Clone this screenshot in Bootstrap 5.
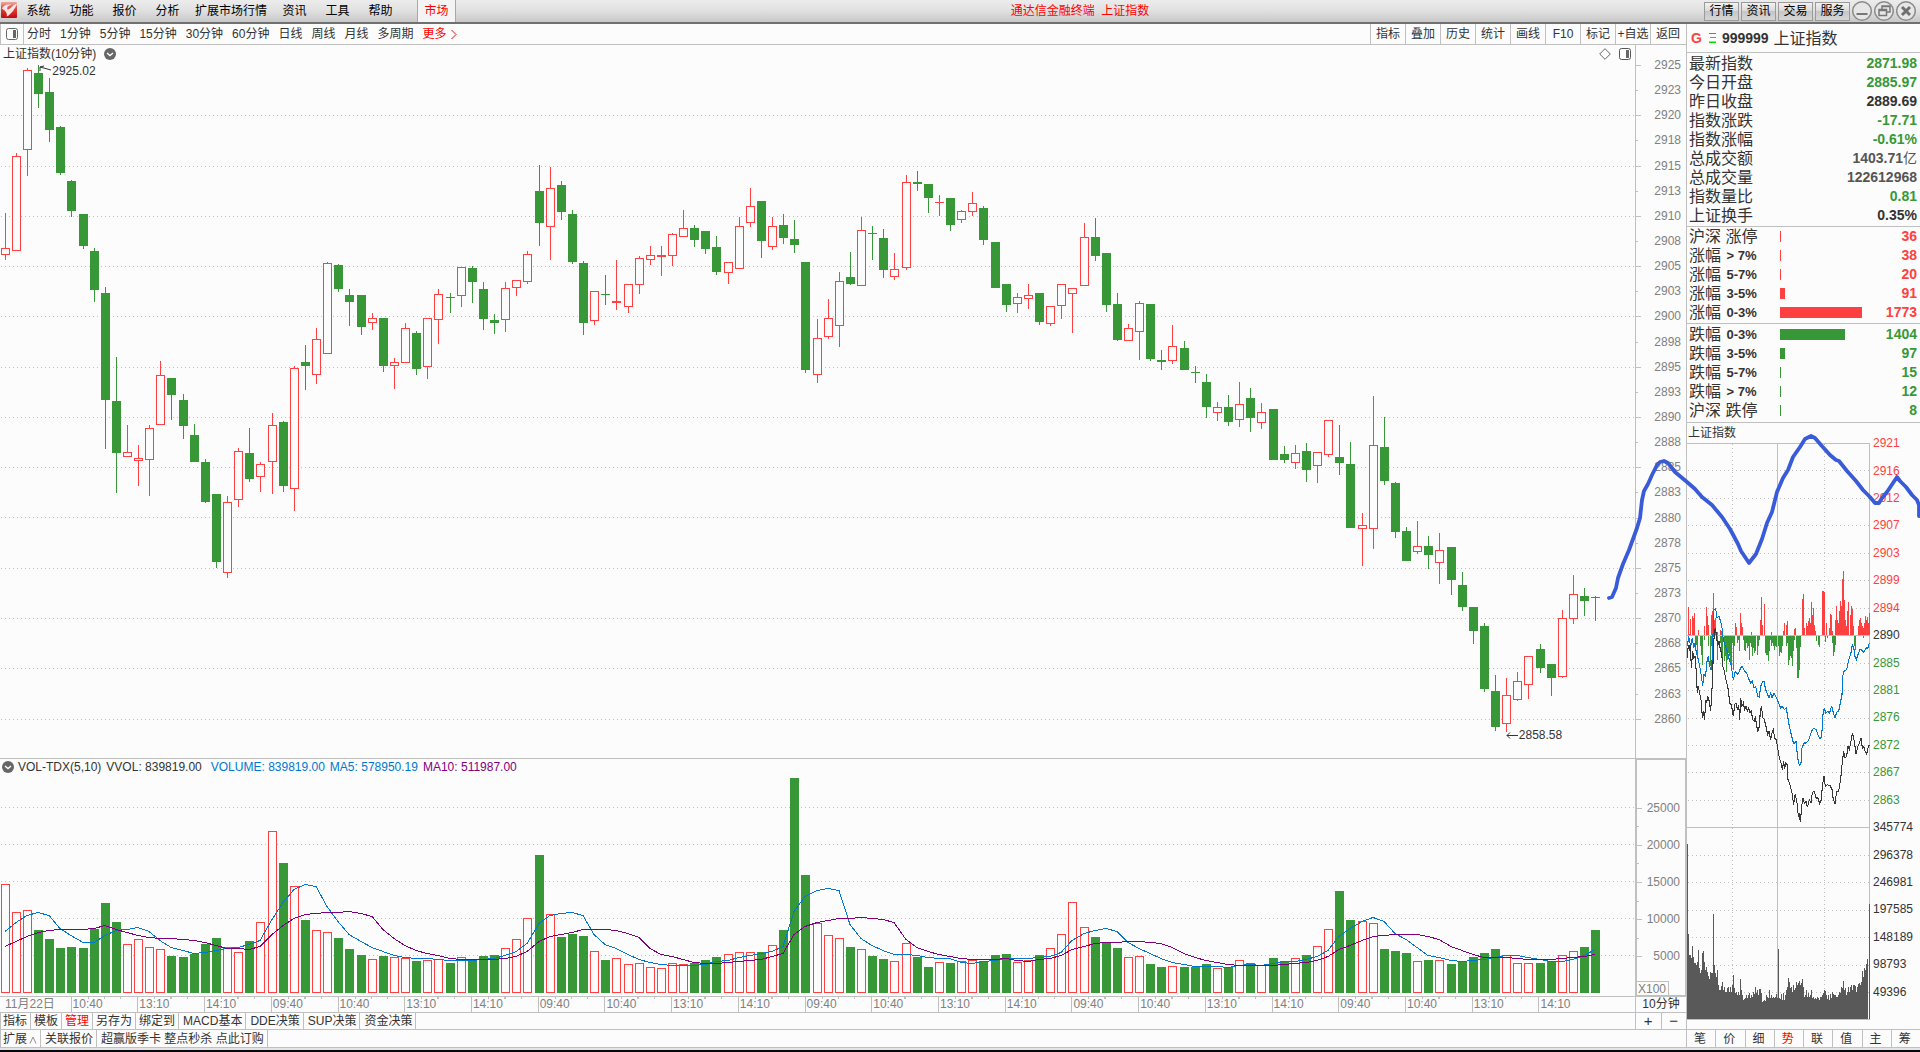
<!DOCTYPE html>
<html lang="zh-CN">
<head>
<meta charset="utf-8">
<meta name="viewport" content="width=device-width, initial-scale=1">
<title>通达信金融终端 上证指数</title>
<link href="https://cdn.jsdelivr.net/npm/bootstrap@5.3.0/dist/css/bootstrap.min.css" rel="stylesheet">
<style>
:root{--up:#ff4040;--down:#389838;--rule:#c0c0c0;--ink:#333;--axis:#808080;--ma5:#0078d0;--ma10:#800080}
body{background:#fcfcfc;color:var(--ink);font-family:"Liberation Sans","Noto Sans CJK SC",sans-serif;font-size:12px;line-height:15px}
button{background:none;border:0;padding:0;color:inherit;font:inherit;white-space:nowrap}
svg{display:block}
.up{color:var(--up)}.down{color:var(--down)}.hot{color:#f00}
.titlebar{height:24px;background:linear-gradient(#ececec,#e2e2e2 45%,#c8c8c8);border-bottom:2px solid #707070;color:#000}
.titlebar .brand{width:16px;height:16px;margin:2px 0 4px 1px}
.menu button{min-width:43px}
.menu .wide{min-width:84px}
.menu .current{min-width:39px;margin-left:15px;background:#f4f4f4;border:solid #a8a8a8;border-width:0 1px;color:#f00}
.quick{width:35px;height:19px;border:1px solid #9a9a9a;background:linear-gradient(#f2f2f2,#d8d8d8 50%,#c6c6c6 50%,#d6d6d6)}
.tools{height:21px;border-bottom:1px solid var(--rule)}
.tools .layout{width:24px;border-right:1px solid var(--rule);border-left:1px solid var(--rule)}
.periods{gap:9px;padding-left:3px}
.actions{padding-right:1px}
.actions button{width:35px;border-left:1px solid var(--rule)}
.stack{display:grid;min-width:0}
.stack>*{grid-area:1/1;min-width:0}
.price{height:714px;border-bottom:1px solid var(--rule)}
.volume{height:238px;border-bottom:1px solid var(--rule)}
.plot{width:100%;height:100%;shape-rendering:crispEdges}
.caption{height:18px;padding-left:3px;align-self:start}
.volume .caption{height:16px;padding-left:2px;gap:5px}
.mark-label{align-self:start}
.axis{flex:0 0 51px;border-left:1px solid var(--rule);color:var(--axis)}
.scale{margin-top:8px;height:679px}
.scale div{flex:1 1 0;display:flex;align-items:center;justify-content:space-between;padding-right:5px;min-height:0}
.scale div::before{content:"";width:5px;height:1px;background:var(--rule)}
.scale div:nth-child(even)::before{width:2px}
.volume .axis{border:solid var(--rule);border-width:1px 1px 1px 2px}
.volume .scale{margin-top:39px;height:167px}
.unit{margin-top:15px;width:32px;height:15px;border:solid var(--rule);border-width:1px 1px 0 0;padding-left:1px}
.times{display:grid;grid-template-columns:706fr repeat(22,667fr) 965fr;flex:1 1 0;color:var(--axis);min-width:0}
.times div{border-left:1px solid var(--rule);padding-left:1px;min-width:0;white-space:nowrap;background:linear-gradient(90deg,transparent 24%,var(--rule) 24%,var(--rule) 26%,transparent 26%,transparent 49%,var(--rule) 49%,var(--rule) 51%,transparent 51%,transparent 74%,var(--rule) 74%,var(--rule) 76%,transparent 76%) 0 0/100% 2px no-repeat}
.times div:first-child,.times div:last-child{background:none}
.times div:first-child{border:0;padding-left:5px}
.strip{height:17px;border-bottom:1px solid var(--rule)}
.strip .side{flex:0 0 51px;border-left:1px solid var(--rule)}
.strip .side button{flex:1;font-size:15px;line-height:14px}
.strip .side button+button{border-left:1px solid var(--rule)}
.strip .tab-cell{border-right:1px solid var(--rule);padding:0 3px}
.strip .tab-cell.roomy{padding:0 3px 0 4px}
.strip .tab-cell:first-child{border-left:1px solid var(--rule);padding-left:2px}
.strip.low .tab-cell{padding-top:2px}
.quote{flex:0 0 234px;border-left:1px solid var(--rule)}
.quote .head{height:29px;border-bottom:1px solid var(--rule);padding-left:4px;font-size:16px;gap:5px}
.quote .head b{font-size:14px}
.quote .head svg{margin-left:2px}
.block{border-bottom:1px solid var(--rule)}
.block table{width:100%;border-collapse:collapse}
.block th,.block td{height:19px;line-height:19px;padding:0;font-size:16px;font-weight:400;white-space:nowrap;vertical-align:middle}
.block th{padding-left:2px}
.block th b{font-size:13px;line-height:1;vertical-align:1px;margin-left:1px}
.block td.num{text-align:right;padding-right:3px;font-size:14px;font-weight:700}
.block td.big{color:#555}
.breadth th{width:93px}
.meter{height:11px;background:currentColor}
.mini-axis{height:576px;margin-top:7px;padding-left:3px}
.mini-axis div{flex:1 1 0;display:flex;align-items:center;min-height:0}
.mini-title{height:20px;line-height:20px;padding-left:1px}
.foot-tabs{height:19px;border:solid var(--rule);border-width:1px 0}
.foot-tabs button{flex:1 1 0;padding:2px 2px 0 0}
.foot-tabs button+button{border-left:1px solid var(--rule)}
.doodle{position:absolute;top:0;right:0;pointer-events:none}
.base{height:4px;background:#e4e4e4;border-bottom:2px solid #05070c}
</style>
<script src="https://cdn.jsdelivr.net/npm/bootstrap@5.3.0/dist/js/bootstrap.bundle.min.js"></script>
</head>
<body class="position-relative">
<header class="titlebar d-flex align-items-stretch">
  <svg class="brand" viewBox="0 0 17 17"><defs><linearGradient id="lg" x2="0" y2="1"><stop stop-color="#f0a8a0"/><stop offset=".45" stop-color="#dc4038"/><stop offset="1" stop-color="#c00c0c"/></linearGradient></defs><rect width="17" height="17" rx="1" fill="url(#lg)"/><path d="M1 7C2 4 6 2 11 3C7 4 6 6 7 8C9 8 12 5 14 3L17 1.500C15 7 11 13 6 15.500C7 12 5 9.500 1 7Z" fill="#fff" opacity=".85"/></svg>
  <nav class="menu d-flex">
    <button>系统</button><button>功能</button><button>报价</button><button>分析</button><button class="wide">扩展市场行情</button><button>资讯</button><button>工具</button><button>帮助</button><button class="current">市场</button>
  </nav>
  <div class="flex-grow-1 text-center hot align-self-center">通达信金融终端&nbsp; 上证指数</div>
  <div class="d-flex align-items-center pe-1" style="gap:2px">
    <button class="quick">行情</button><button class="quick">资讯</button><button class="quick">交易</button><button class="quick">服务</button>
    <button aria-label="最小化"><svg width="20" height="22" viewBox="0 0 20 22"><circle cx="10" cy="11" r="9.300" stroke="#8c8c8c" stroke-width="1.500" fill="#e6e6e6"/><path d="M4.500 14h11" stroke="#777" stroke-width="2"/></svg></button>
    <button aria-label="还原"><svg width="20" height="22" viewBox="0 0 20 22" fill="none"><circle cx="10" cy="11" r="9.300" stroke="#8c8c8c" stroke-width="1.500" fill="#e6e6e6"/><path d="M8 9V6h8v6h-3M8 6.500h8M5 9.500h7.500v6H5zM5 10.500h7" stroke="#777" stroke-width="1.500"/></svg></button>
    <button aria-label="关闭"><svg width="20" height="22" viewBox="0 0 20 22"><circle cx="10" cy="11" r="9.300" stroke="#8c8c8c" stroke-width="1.500" fill="#e6e6e6"/><path d="M6 7l8 8M14 7l-8 8" stroke="#707070" stroke-width="3"/></svg></button>
  </div>
</header>
<div class="d-flex">
<main class="flex-grow-1" style="min-width:0">
  <div class="tools d-flex justify-content-between">
    <div class="d-flex">
      <button class="layout d-flex align-items-center justify-content-center" aria-label="布局"><svg width="12" height="12" viewBox="0 0 12 12"><rect x=".5" y=".5" width="11" height="11" rx="2" fill="none" stroke="#666"/><path d="M7 2h3v8H7z" fill="#666"/></svg></button>
      <div class="periods d-flex"><button>分时</button><button>1分钟</button><button>5分钟</button><button>15分钟</button><button>30分钟</button><button>60分钟</button><button>日线</button><button>周线</button><button>月线</button><button>多周期</button><button class="hot d-flex align-items-center gap-1">更多<svg width="6" height="11" viewBox="0 0 6 11"><path d="M.5 1L5 5.500L.5 10" fill="none" stroke="red"/></svg></button></div>
    </div>
    <div class="actions d-flex"><button>指标</button><button>叠加</button><button>历史</button><button>统计</button><button>画线</button><button>F10</button><button>标记</button><button>+自选</button><button>返回</button></div>
  </div>

  <section class="price d-flex">
    <div class="stack flex-grow-1">
      <svg class="plot" id="price" viewBox="0 45 1635 713" preserveAspectRatio="none"></svg>
      <div class="caption d-flex align-items-center justify-content-between">
        <span class="d-flex align-items-center gap-2">上证指数(10分钟)<svg width="12" height="12" viewBox="0 0 12 12"><circle cx="6" cy="6" r="6" fill="#666"/><path d="M3 5l3 2.500L9 5" fill="none" stroke="#fff" stroke-width="1.400"/></svg></span>
        <span class="d-flex align-items-center gap-2 pe-1"><svg width="12" height="12" viewBox="0 0 12 12"><path d="M6 .7L11.300 6L6 11.300L.7 6z" fill="none" stroke="#666"/></svg><svg width="12" height="12" viewBox="0 0 12 12"><rect x=".5" y=".5" width="11" height="11" rx="2" fill="none" stroke="#555"/><path d="M7 2h3v8H7z" fill="#666"/></svg></span>
      </div>
      <div class="mark-label d-flex" style="margin-left:2.4%;margin-top:19px"><svg width="13" height="8" viewBox="0 0 13 8"><path d="M1 3l11 3M1 7V3l4-1" fill="none" stroke="#333"/></svg><span>2925.02</span></div>
      <div class="mark-label d-flex align-items-center" style="margin-left:92.1%;margin-top:683px"><svg width="13" height="8" viewBox="0 0 13 8"><path d="M1 3.500h11M4 .5L1 3.500L4 6.500" fill="none" stroke="#333"/></svg><span>2858.58</span></div>
    </div>
    <div class="axis"><div class="scale d-flex flex-column" id="priceScale"></div></div>
  </section>

  <section class="volume d-flex">
    <div class="stack flex-grow-1">
      <svg class="plot" id="vol" viewBox="0 759 1635 237" preserveAspectRatio="none"></svg>
      <div class="caption d-flex align-items-center"><span class="d-flex align-items-center gap-1"><svg width="12" height="12" viewBox="0 0 12 12"><circle cx="6" cy="6" r="6" fill="#666"/><path d="M3 5l3 2.500L9 5" fill="none" stroke="#fff" stroke-width="1.400"/></svg>VOL-TDX(5,10)</span><span>VVOL: 839819.00</span><span class="ms-1" style="color:var(--ma5)">VOLUME: 839819.00</span><span style="color:var(--ma5)">MA5: 578950.19</span><span style="color:var(--ma10)">MA10: 511987.00</span></div>
    </div>
    <div class="axis"><div class="scale d-flex flex-column" id="volScale"></div><div class="unit">X100</div></div>
  </section>

  <div class="strip d-flex" style="height:16px"><div class="times" id="times"></div><div class="side text-center">10分钟</div></div>
  <div class="strip d-flex justify-content-between">
    <div class="d-flex"><button class="tab-cell">指标</button><button class="tab-cell">模板</button><button class="tab-cell hot">管理</button><button class="tab-cell">另存为</button><button class="tab-cell">绑定到</button><button class="tab-cell roomy">MACD基本</button><button class="tab-cell roomy">DDE决策</button><button class="tab-cell roomy">SUP决策</button><button class="tab-cell roomy">资金决策</button></div>
    <div class="side d-flex"><button>+</button><button>−</button></div>
  </div>
  <div class="strip low d-flex" style="height:18px"><button class="tab-cell roomy d-flex align-items-center" style="gap:2px">扩展<svg width="8" height="8" viewBox="0 0 8 8"><path d="M1 7.500L4 1L7 7.500" fill="none" stroke="#909090"/></svg></button><button class="tab-cell roomy">关联报价</button><button class="tab-cell roomy">超赢版季卡 整点秒杀 点此订购</button></div>
</main>

<aside class="quote d-flex flex-column">
  <div class="head d-flex align-items-center"><span class="up fw-bold" style="font-size:14px">G</span>
    <svg width="8" height="10" viewBox="0 0 8 10"><path d="M0 .5h7" stroke="#ff4040"/><path d="M1 4.500h6" stroke="#888"/><path d="M0 9.500h7" stroke="#0d0" stroke-width="2"/></svg>
    <b>999999</b><span>上证指数</span></div>
  <div class="block" style="padding:1px 0"><table id="facts"></table></div>
  <div class="block" style="padding-bottom:1px"><table class="breadth" id="rise"></table></div>
  <div class="block" style="padding:1px 0 2px"><table class="breadth" id="fall"></table></div>
  <div class="d-flex">
    <div>
      <div class="mini-title">上证指数</div>
      <svg id="mini" width="183" height="577" viewBox="0 0 183 577" shape-rendering="crispEdges"></svg>
    </div>
    <div class="mini-axis d-flex flex-column" id="miniAxis"></div>
  </div>
  <div class="foot-tabs d-flex mt-auto"><button>笔</button><button>价</button><button>细</button><button class="hot">势</button><button>联</button><button>值</button><button>主</button><button>筹</button></div>
</aside>
</div>
<div class="base"></div>

<svg class="doodle" width="320" height="640" viewBox="1600 0 320 640" fill="none" stroke="#3a5bd8" stroke-width="3.800" stroke-linejoin="round" stroke-linecap="round"><path d="M1609 598L1612 597L1616 588L1618 578L1623 564L1629 550L1633 539L1637 528L1640 518L1642 500L1644 491L1648 484L1652 475L1657 465L1660 462L1664 461L1668 463L1675 472L1687 482L1695 489L1702 497L1712 505L1722 517L1730 529L1738 544L1741 551L1749 563L1756 554L1762 539L1767 523L1772 512L1777 492L1783 478L1788 470L1793 457L1800 447L1805 439L1811 436L1815 438L1821 445L1830 455L1836 460L1839 461L1847 471L1856 481L1863 490L1870 497L1875 503L1879 503L1882 498L1887 492L1893 483L1897 477L1900 481L1906 487L1912 495L1917 500L1919 505L1919 516"/></svg>

<script>
const RED='#ff4040', GREEN='#389838', RULE='#c0c0c0';
// One candle per entry: colour, high, body top, body bottom, low, volume top
const candles=`R 213 248 255 260 884,R 153 156 251 251 912,R 68 70 150 176 910,G 65 73 94 108 930,G 78 92 130 142 939,G 126 127 173 175 948,G 180 181 211 217 947,G 214 214 246 249 948,G 248 251 290 302 929,G 287 293 400 449 903,G 357 401 453 493 922,R 425 452 457 457 944,R 445 458 461 486 939,R 425 428 460 496 947,R 361 375 425 425 949,G 378 378 395 420 956,G 394 400 426 439 957,G 424 435 462 462 954,G 459 462 502 503 944,G 494 494 562 568 938,R 496 502 573 578 947,R 448 451 500 507 952,G 428 453 479 482 941,R 462 464 477 492 922,
R 413 425 462 494 831,G 421 422 486 492 863,R 366 368 489 511 886,G 345 362 366 390 920,R 328 339 375 384 930,R 262 263 354 354 932,G 264 265 289 292 938,G 289 295 302 326 949,G 295 295 327 335 955,R 313 318 323 330 959,G 318 318 366 372 956,R 358 362 366 389 957,R 323 328 363 363 958,G 331 333 369 375 961,R 318 318 367 379 960,R 289 294 320 344 959,G 293 297 298 313 963,R 267 267 296 307 957,G 266 268 282 303 959,G 282 289 319 330 956,G 314 320 323 334 955,R 282 288 320 332 948,R 280 280 288 296 939,R 251 254 282 284 918,
G 165 191 223 246 855,R 167 188 227 260 914,G 181 185 212 220 937,G 210 214 262 264 934,G 261 263 323 335 936,R 291 291 321 325 951,G 275 294 295 305 960,R 260 301 303 310 958,R 284 284 307 313 964,R 256 258 285 294 963,R 246 255 260 265 967,R 246 255 257 276 968,R 233 234 256 266 963,R 210 228 237 237 964,G 225 228 240 247 963,G 231 231 249 254 960,G 236 247 272 275 957,R 262 262 273 284 954,R 217 226 269 269 952,R 188 206 223 227 952,G 201 201 241 258 952,R 217 226 247 250 945,G 214 225 238 244 930,G 220 239 245 253 778,
G 262 262 370 373 875,R 319 338 375 383 923,R 299 318 337 339 935,R 272 281 326 347 938,G 252 277 284 285 947,R 217 230 286 286 949,G 226 233 234 260 956,G 229 238 270 278 959,R 253 269 277 280 961,R 175 182 268 270 943,G 171 182 184 191 957,G 184 184 198 213 967,R 195 202 203 216 962,G 198 198 225 231 963,R 210 211 220 223 961,R 192 203 212 216 960,G 206 208 240 245 961,G 242 242 288 288 955,G 284 284 305 312 954,R 293 297 304 313 962,R 284 295 299 309 960,G 293 293 322 325 955,R 306 306 324 326 948,R 284 284 306 319 934,
R 288 288 294 333 902,R 223 237 286 286 927,G 218 237 256 261 937,G 253 253 305 312 942,G 293 304 340 341 948,R 324 328 341 341 957,R 301 303 332 360 956,G 304 304 359 361 964,G 350 360 362 370 967,R 325 346 361 364 966,G 341 348 370 370 967,G 366 372 373 383 967,G 374 382 407 418 964,R 402 407 413 421 968,G 395 407 422 426 967,R 382 404 420 427 960,G 388 398 418 432 963,R 403 412 423 429 965,G 409 409 460 460 958,G 446 454 460 463 961,R 445 453 463 469 958,G 443 451 470 482 955,R 452 452 466 483 946,R 420 420 455 457 929,
G 425 457 463 475 891,G 442 464 528 528 920,R 513 525 529 566 921,R 396 445 529 549 923,G 417 447 481 485 949,G 482 483 532 538 951,G 527 531 561 561 953,R 521 546 552 554 961,G 536 546 555 569 960,R 533 550 563 584 960,G 547 547 580 595 964,G 572 585 607 611 961,G 607 607 631 644 957,G 623 626 689 692 953,G 675 691 727 731 949,R 678 695 724 732 955,R 672 681 700 701 963,R 656 656 685 699 963,G 644 649 668 673 963,G 664 664 678 696 961,R 610 618 677 678 955,R 575 594 619 624 951,G 588 596 601 616 947,G 596 597 598 621 930`
 .replace(/\n/g,'').split(',').map(s=>{const [c,...n]=s.split(' ');return [c,...n.map(Number)]});

const rect=(x,y,w,h,f)=>`<rect x="${x}" y="${y}" width="${w}" height="${h}" fill="${f}"/>`;
const box=(x,y,w,h)=>h<3?rect(x,y,w,h,RED):`<rect x="${x+.5}" y="${y+.5}" width="${w-1}" height="${h-1}" fill="#fcfcfc" stroke="${RED}"/>`;
const dots=(y,w)=>`<path d="M1 ${y+.5}H${w}" stroke="${RULE}" stroke-dasharray="1 3"/>`;
const cx=i=>Math.floor(5.17+11.122*i);

let p='';
for(let k=0;k<13;k++) p+=dots(Math.round(115.3+50.27*k),1635);
candles.forEach(([c,hi,t,b,lo],i)=>{const x=cx(i),f=c=='R'?RED:GREEN;
  p+=rect(x,hi,1,lo-hi,f)+(c=='R'?box(x-4,t,9,b-t):rect(x-4,t,9,b-t,f));});
document.getElementById('price').innerHTML=p;

let v='';
for(let k=0;k<5;k++) v+=dots(807+37*k,1635);
candles.forEach(([c,,,,,t],i)=>{const x=cx(i);v+=c=='R'?box(x-4,t,9,993-t):rect(x-4,t,9,993-t,GREEN);});
const average=(n,lead)=>candles.map((_,i)=>{const y=i<lead.length?lead[i]:candles.slice(i-n+1,i+1).reduce((a,k)=>a+k[5],0)/n;return cx(i)+','+(Math.round(y)+.5)}).join(' ');
v+=`<polyline points="${average(5,[931,922,915,912])}" fill="none" stroke="#0078d0"/><polyline points="${average(10,[946,941,936,932,930,929,929,929,928])}" fill="none" stroke="#800080"/>`;
document.getElementById('vol').innerHTML=v;

const fill=(id,html)=>document.getElementById(id).innerHTML=html;
fill('priceScale',[2925,2923,2920,2918,2915,2913,2910,2908,2905,2903,2900,2898,2895,2893,2890,2888,2885,2883,2880,2878,2875,2873,2870,2868,2865,2863,2860].map(n=>`<div>${n}</div>`).join(''));
fill('volScale',['25000','','20000','','15000','','10000','','5000'].map(n=>`<div>${n}</div>`).join(''));
fill('times','<div>11月22日</div>'+Array.from({length:23},(_,i)=>`<div>${['10:40','13:10','14:10','09:40'][i%4]}</div>`).join(''));

fill('facts',[['最新指数','2871.98','down'],['今日开盘','2885.97','down'],['昨日收盘','2889.69',''],['指数涨跌','-17.71','down'],['指数涨幅','-0.61%','down'],['总成交额','1403.71<span class="fw-normal">亿</span>','big'],['总成交量','122612968','big'],['指数量比','0.81','down'],['上证换手','0.35%','']]
 .map(r=>`<tr><th scope="row">${r[0]}</th><td class="num ${r[2]}">${r[1]}</td></tr>`).join(''));
const breadth=(id,cls,rows)=>fill(id,rows.map(r=>`<tr><th scope="row">${r[0]}</th><td class="${cls}"><div class="meter" style="width:${r[2]}px"></div></td><td class="num ${cls}">${r[1]}</td></tr>`).join(''));
breadth('rise','up',[['沪深 涨停',36,1],['涨幅 <b>&gt; 7%</b>',38,1],['涨幅 <b>5-7%</b>',20,1],['涨幅 <b>3-5%</b>',91,5],['涨幅 <b>0-3%</b>',1773,82]]);
breadth('fall','down',[['跌幅 <b>0-3%</b>',1404,65],['跌幅 <b>3-5%</b>',97,5],['跌幅 <b>5-7%</b>',15,1],['跌幅 <b>&gt; 7%</b>',12,1],['沪深 跌停',8,1]]);

fill('miniAxis',[2921,2916,2912,2907,2903,2899,2894,2890,2885,2881,2876,2872,2867,2863,345774,296378,246981,197585,148189,98793,49396]
 .map((n,i)=>`<div class="${i<7?'up':i>7&&i<14?'down':''}">${n}</div>`).join(''));

// Intraday chart: traces are held at three units per pixel
const upBars='205:592 209:672 212:628 217:618 220:625 223:610 236:660 252:648 260:592 263:620 266:645 273:615 276:605 280:550 283:630 286:625 289:670 293:668 300:660 305:665 347:640 350:652 361:610 364:640 368:652 393:668 421:630 424:562 427:645 433:583 455:666 490:665 493:640 500:645 502:633 524:658 527:655 547:568 550:553 553:655 558:640 561:650 565:635 568:625 571:640 574:577 577:615 580:595 583:645 587:665 608:545 611:545 614:548 620:640 628:655 631:612 634:615 637:665 646:630 649:588 652:630 655:640 658:605 661:575 664:590 667:508 670:485 673:570 676:632 680:650 683:603 686:578 690:615 693:650 695:590 698:598 701:650 714:650 717:630 720:625 723:640 727:650 730:655 733:640 737:620 740:630 743:622 746:640 748:610';
const downBars='226:710 229:705 232:740 241:710 244:735 248:765 254:690 266:710 270:770 273:710 292:750 300:700 304:730 308:765 312:755 316:740 319:788 322:750 325:730 328:740 331:760 334:765 337:700 340:780 343:710 352:700 356:690 359:725 371:690 374:722 377:725 380:700 383:715 386:710 389:750 392:700 395:712 398:738 401:715 404:730 407:725 411:735 415:710 418:690 436:730 440:735 443:735 446:755 449:725 452:690 455:710 458:700 461:710 464:722 467:710 470:712 474:708 477:740 480:728 484:730 487:710 499:710 502:700 505:765 508:750 511:740 514:745 517:768 520:725 524:690 530:715 533:805 536:805 539:780 542:712 590:695 594:705 599:712 616:698 622:685 637:700 640:738 643:728 646:705 702:710 705:720 730:684';
const indexLine='202,745 205,705 208,725 211,700 214,775 218,725 221,745 225,740 228,775 232,850 235,830 239,850 244,875 247,925 250,905 254,930 257,870 260,880 263,860 268,875 272,905 275,855 278,800 280,720 283,670 286,655 289,675 293,710 297,695 301,720 305,730 308,770 312,780 318,810 325,840 329,880 334,885 340,920 344,885 348,880 352,900 356,885 359,930 362,865 366,890 370,880 374,900 378,890 382,905 386,895 390,910 394,905 398,930 403,935 406,920 410,950 414,965 418,950 421,905 424,890 429,925 433,930 438,950 443,975 447,965 452,990 456,970 460,960 464,985 469,990 474,1020 478,1045 483,1060 487,1080 491,1055 494,1078 497,1060 501,1065 504,1110 510,1125 516,1150 521,1185 525,1155 530,1170 535,1220 538,1215 541,1238 545,1190 549,1165 553,1180 558,1175 562,1193 568,1170 573,1180 577,1148 583,1145 588,1165 594,1165 599,1183 604,1170 607,1130 612,1100 616,1130 622,1125 630,1128 636,1140 640,1170 645,1182 650,1145 656,1145 660,1120 664,1090 667,1055 671,1025 675,1045 680,1040 684,1010 688,1020 692,1000 697,970 701,985 705,1010 708,1032 714,1010 718,1000 723,985 727,1015 731,1010 736,1028 740,1033 744,1015 748,1005';
const leadLine='202,710 206,680 210,700 213,705 217,685 221,715 225,700 229,730 235,750 242,785 248,828 252,795 257,800 260,760 265,740 269,770 273,780 277,745 279,680 281,600 287,597 291,625 297,620 302,635 306,655 310,690 316,710 322,725 328,750 333,765 340,810 346,785 352,795 358,785 363,772 368,772 374,785 380,790 386,808 392,820 397,815 402,835 407,830 413,860 418,862 422,830 428,815 432,815 437,840 443,855 447,865 452,850 456,865 462,850 470,865 476,880 482,895 487,890 493,900 499,895 503,920 508,950 514,975 520,1000 524,1000 528,995 533,1045 538,1068 543,1060 546,1015 552,1000 558,1000 564,995 570,980 576,962 582,955 588,960 594,975 600,988 605,980 609,915 613,895 617,910 623,905 629,910 635,888 640,910 645,925 650,908 656,905 661,880 666,855 668,800 672,785 680,780 686,750 692,735 697,705 701,712 705,740 709,750 714,735 720,718 726,722 732,728 738,715 744,715 748,700';
const turnover=[312,582,645,645,655,618,650,670,668,675,665,630,683,700,690,640,632,665,690,680,697,708,717,695,700,700,522,675,700,712,690,735,750,750,738,725,750,740,755,755,745,740,755,740,755,735,705,745,760,755,765,755,765,717,750,765,780,778,775,765,775,765,758,775,765,770,755,762,740,760,750,765,748,748,760,785,782,780,782,765,770,775,750,773,765,773,772,773,770,762,775,627,773,778,762,780,760,780,765,750,740,714,725,745,740,755,735,750,745,725,735,730,722,735,730,717,740,770,765,750,772,760,770,765,750,775,770,778,775,778,770,775,780,770,772,765,760,750,752,765,778,765,780,762,775,755,762,765,765,770,772,765,755,758,740,745,722,750,745,765,755,740,755,740,735,750,735,735,738,755,740,732,730,735,725,693,710,685,690,672,657,837,492];
let m='';
for(let k=1;k<21;k++) m+=(k==7||k==14)?rect(0,Math.round(27.45*k),183,1,RULE):`<path d="M1 ${Math.round(27.45*k)+.5}H182" stroke="${RULE}" stroke-dasharray="1 3"/>`;
m+=`<path d="M0 .5H183M0 576.5H183M90.5 0V577M182.5 0V577" stroke="${RULE}"/><path d="M45.5 1V577M137.5 1V577" stroke="${RULE}" stroke-dasharray="1 3"/>`;
upBars.split(' ').forEach(s=>{const [x,y]=s.split(':'),t=Math.round((y-100)/3);m+=rect(Math.floor((x-201)/3),t,1,192-t,RED)});
downBars.split(' ').forEach(s=>{const [x,y]=s.split(':'),b=Math.round((y-100)/3);m+=rect(Math.floor((x-201)/3),193,1,b-193,GREEN)});
m+=`<g transform="scale(.333333) translate(-201 -100)" fill="none" stroke-width="3.200"><polyline points="${indexLine}" stroke="#383838"/><polyline points="${leadLine}" stroke="#0078d0"/></g>`;
turnover.forEach((y,i)=>{const h=Math.round((837-y)/3);m+=rect(i,576-h,1,h,'#595959')});
fill('mini',m);
</script>
</body>
</html>
